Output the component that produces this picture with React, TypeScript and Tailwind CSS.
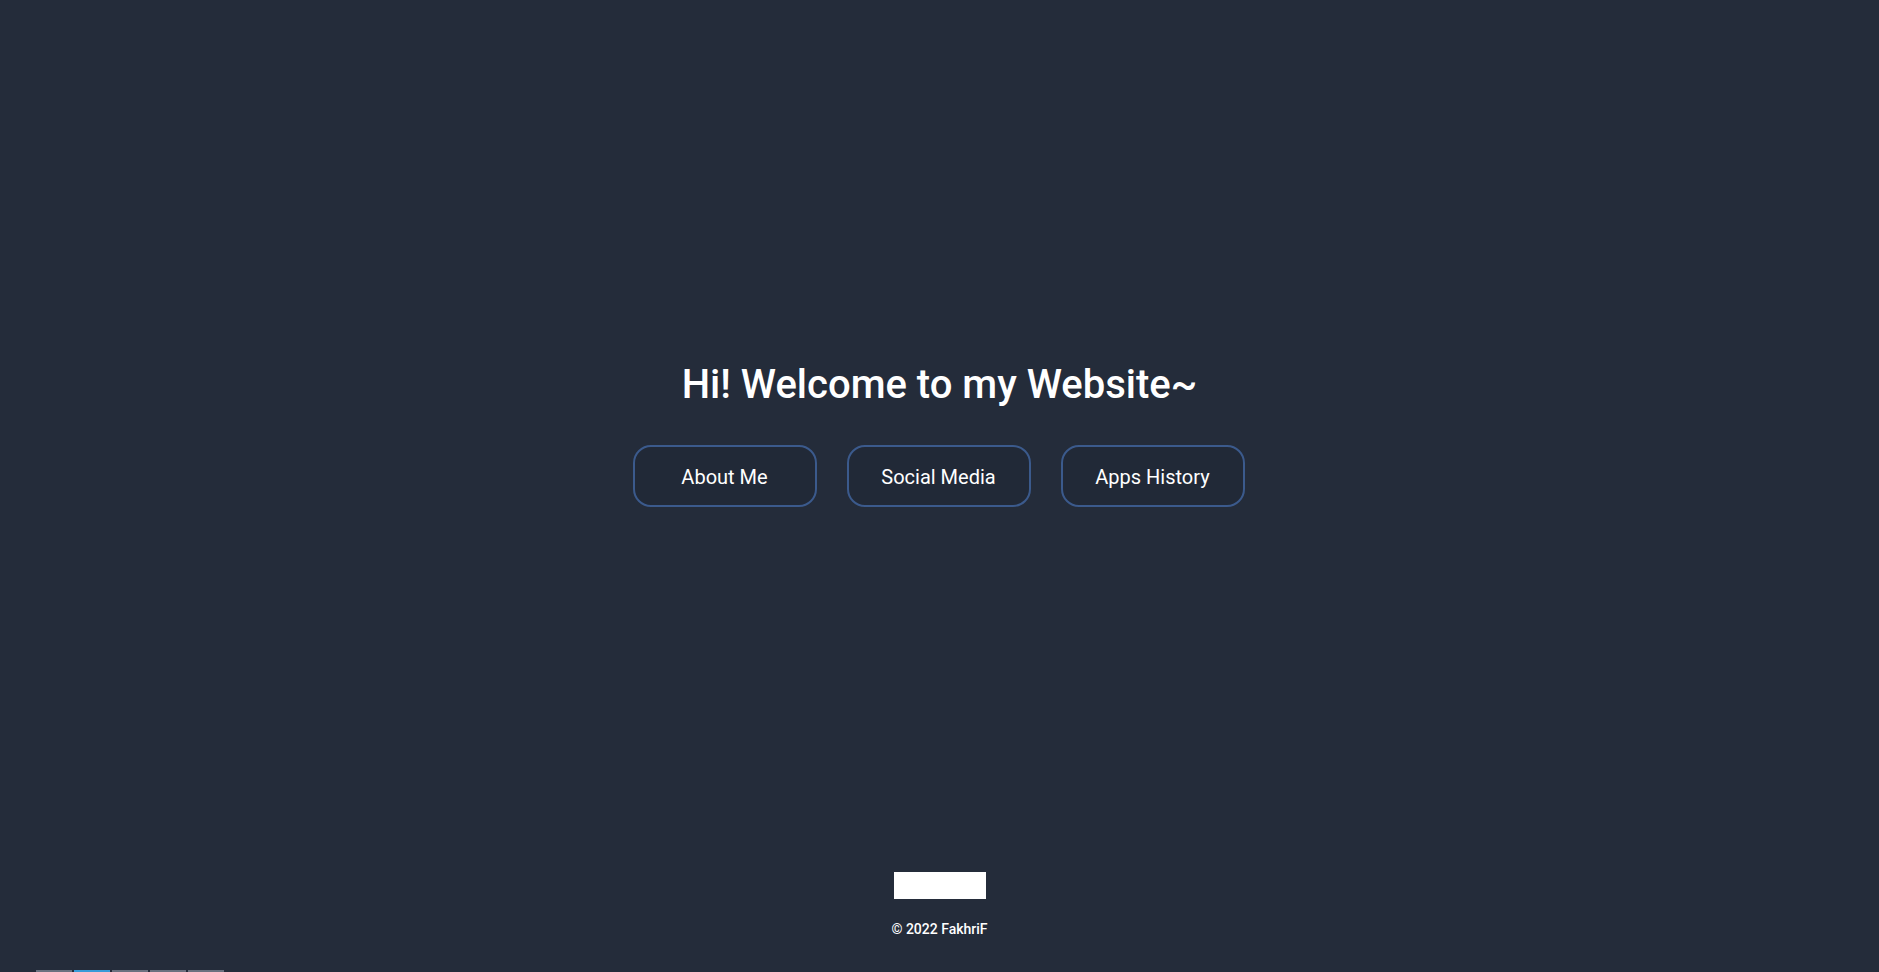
const links = ['About Me', 'Social Media', 'Apps History'];

export default function App() {
  return (
    <div
      className="min-h-screen bg-[#242c3a] text-white overflow-hidden"
      style={{ fontFamily: 'Roboto, "Liberation Sans", sans-serif' }}
    >
      {/* Hero */}
      <section className="pt-[361px] flex flex-col items-center">
        <h1 className="text-[40px] leading-[47px] font-medium text-white">
          Hi! Welcome to my Website~
        </h1>

        <div className="mt-[37px] flex justify-center gap-[30px] pr-[2px]">
          {links.map((label) => (
            <button
              key={label}
              className="w-[184px] h-[62px] pt-[2px] rounded-[18px] border-2 border-[#3b5a8c] bg-[#212937] text-[20px] text-white"
            >
              {label}
            </button>
          ))}
        </div>
      </section>

      {/* Footer */}
      <footer className="mt-[365px] flex flex-col items-center">
        <div className="w-[92px] h-[27px] bg-white"></div>
        <p className="mt-[20px] text-[14px] leading-[20px] font-medium text-white">
          © 2022 FakhriF
        </p>
      </footer>

      {/* Tabs peeking below the fold */}
      <div className="mt-[31px] pl-[36px] flex gap-[2px]">
        <div className="w-[36px] h-[30px] bg-[#6b7280]"></div>
        <div className="w-[36px] h-[30px] bg-[#3a9bd8]"></div>
        <div className="w-[36px] h-[30px] bg-[#6b7280]"></div>
        <div className="w-[36px] h-[30px] bg-[#6b7280]"></div>
        <div className="w-[36px] h-[30px] bg-[#6b7280]"></div>
      </div>
    </div>
  );
}
